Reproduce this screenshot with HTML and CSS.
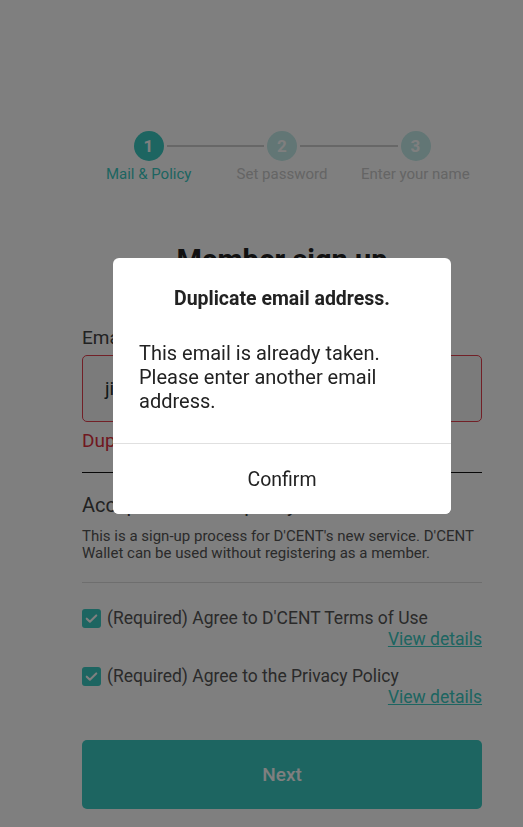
FILE: index.html
```html
<!DOCTYPE html>
<html lang="en">
<head>
<meta charset="utf-8">
<title>Member sign up</title>
<link rel="stylesheet" href="styles.css">
</head>
<body>
<main class="page">
  <div class="steps">
    <span class="circle active">1</span>
    <span class="line"></span>
    <span class="circle">2</span>
    <span class="line"></span>
    <span class="circle">3</span>
  </div>
  <div class="step-labels">
    <span class="label active">Mail &amp; Policy</span>
    <span class="label">Set password</span>
    <span class="label">Enter your name</span>
  </div>

  <h1 class="title">Member sign up</h1>

  <label class="field-label">Email</label>
  <div class="input">jiwon</div>
  <p class="error">Duplicate email address.</p>

  <div class="rule"></div>

  <h2 class="section-title">Accept terms and policy</h2>
  <p class="desc">This is a sign-up process for D'CENT's new service. D'CENT Wallet can be used without registering as a member.</p>
  <div class="divider"></div>

  <div class="agree">
    <div class="agree-row">
      <span class="check"><svg viewBox="0 0 20 20" width="19" height="19"><path d="M5 10.2l3.3 3.2L15 6.8" fill="none" stroke="#fff" stroke-width="2.2" stroke-linecap="round" stroke-linejoin="round"/></svg></span>
      <span class="agree-text">(Required) Agree to D'CENT Terms of Use</span>
    </div>
    <a class="details">View details</a>
  </div>
  <div class="agree second">
    <div class="agree-row">
      <span class="check"><svg viewBox="0 0 20 20" width="19" height="19"><path d="M5 10.2l3.3 3.2L15 6.8" fill="none" stroke="#fff" stroke-width="2.2" stroke-linecap="round" stroke-linejoin="round"/></svg></span>
      <span class="agree-text">(Required) Agree to the Privacy Policy</span>
    </div>
    <a class="details">View details</a>
  </div>

  <button class="next">Next</button>
</main>

<div class="overlay">
  <div class="modal">
    <div class="modal-body">
      <h3 class="modal-title">Duplicate email address.</h3>
      <p class="modal-text">This email is already taken. Please enter another email address.</p>
    </div>
    <button class="modal-btn">Confirm</button>
  </div>
</div>
</body>
</html>
```

FILE: styles.css
```css
* { box-sizing: border-box; }
html, body { margin: 0; padding: 0; background: #fff; }
body {
  font-family: Roboto, "Liberation Sans", Arial, sans-serif;
  color: #444;
  width: 523px;
  height: 827px;
  overflow: hidden;
}
.page {
  width: 400px;
  margin-left: 82px;
  padding-top: 131px;
}
.steps {
  display: flex;
  align-items: center;
  padding: 0 51.5px;
}
.circle {
  width: 30px;
  height: 30px;
  border-radius: 50%;
  background: #c4ecea;
  color: #fff;
  font-weight: 700;
  font-size: 17px;
  display: flex;
  align-items: center;
  justify-content: center;
  flex: none;
}
.circle.active { background: #3acac2; }
.line {
  flex: 1;
  height: 2px;
  margin: 0 3px;
  background: #cfcfcf;
}
.step-labels {
  display: grid;
  grid-template-columns: repeat(3, 1fr);
  margin-top: 4px;
}
.label {
  text-align: center;
  font-size: 15px;
  line-height: 18px;
  color: #cacaca;
}
.label.active { color: #3acac2; }
.title {
  margin: 60px 0 0;
  text-align: center;
  font-size: 29px;
  line-height: 34px;
  font-weight: 700;
  color: #222;
}
.field-label {
  display: block;
  margin-top: 50px;
  font-size: 19px;
  line-height: 22px;
  color: #444;
}
.input {
  margin-top: 6px;
  height: 67px;
  border: 1px solid #e5404f;
  border-radius: 5px;
  background: #f7f7f7;
  padding-left: 22px;
  display: flex;
  align-items: center;
  font-size: 19px;
  color: #233;
}
.error {
  margin: 8px 0 0;
  font-size: 19px;
  line-height: 22px;
  color: #e0303e;
}
.rule {
  margin-top: 20px;
  height: 1px;
  background: #111;
}
.section-title {
  margin: 20px 0 0;
  font-size: 20px;
  line-height: 24px;
  font-weight: 400;
  color: #444;
}
.desc {
  margin: 11px 0 0;
  font-size: 15px;
  line-height: 17px;
  color: #555;
}
.divider {
  margin-top: 20px;
  height: 1px;
  background: #dcdcdc;
}
.agree { margin-top: 25px; }
.agree.second { margin-top: 16px; }
.agree-row {
  display: flex;
  align-items: center;
  gap: 6px;
}
.check {
  width: 19px;
  height: 19px;
  border-radius: 3px;
  background: #3acac2;
  display: flex;
  flex: none;
}
.agree-text {
  font-size: 17.5px;
  line-height: 20px;
  color: #555;
}
.details {
  display: block;
  text-align: right;
  font-size: 17.5px;
  line-height: 22px;
  color: #3acac2;
  text-decoration: underline;
}
.next {
  display: block;
  width: 100%;
  height: 69px;
  margin-top: 32px;
  border: 0;
  border-radius: 5px;
  background: #3acac2;
  color: #fff;
  font-family: inherit;
  font-size: 19px;
  font-weight: 500;
}
.overlay {
  position: fixed;
  inset: 0;
  background: rgba(0, 0, 0, 0.5);
  padding: 258px 0 0 113px;
}
.modal {
  width: 338px;
  background: #fff;
  border-radius: 6px;
  overflow: hidden;
}
.modal-body {
  padding: 30px 26px 30px;
  border-bottom: 1px solid #e0e0e0;
}
.modal-title {
  margin: 0;
  text-align: center;
  font-size: 19.5px;
  line-height: 22px;
  font-weight: 700;
  color: #222;
}
.modal-text {
  margin: 31px 0 0;
  font-size: 20px;
  line-height: 24px;
  color: #222;
}
.modal-btn {
  display: block;
  width: 100%;
  height: 70px;
  border: 0;
  background: #fff;
  font-family: inherit;
  font-size: 19.5px;
  color: #222;
}
```
